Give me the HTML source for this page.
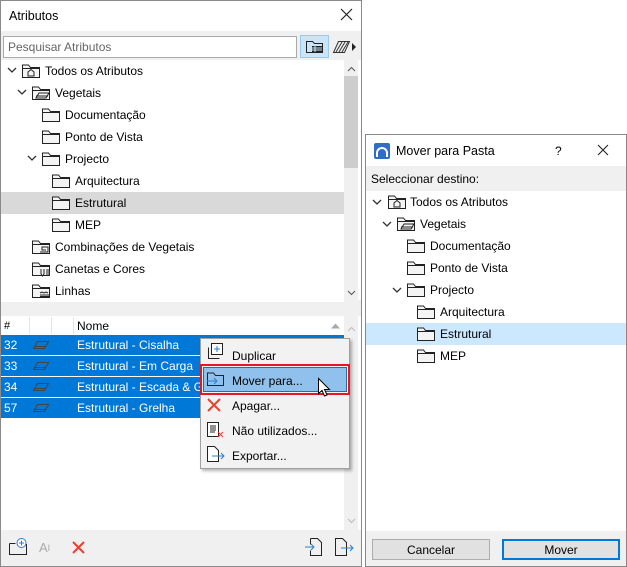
<!DOCTYPE html>
<html><head><meta charset="utf-8"><style>
*{margin:0;padding:0;box-sizing:border-box}
body{width:627px;height:567px;background:#fff;font-family:"Liberation Sans",sans-serif;font-size:12px;color:#000;position:relative;overflow:hidden}
.a{position:absolute}
.t{position:absolute;white-space:nowrap;line-height:16px}
svg{position:absolute;overflow:visible}
</style></head><body>
<svg width="0" height="0"><defs>
<g id="f"><path d="M0.5 2.5v11h17v-10h-9l-2-2.5h-6z" fill="#f4f4f4" stroke="#222"/><path d="M0.5 4.5h17" stroke="#222"/></g>
<g id="ch"><path d="M0 0l4 4 4-4" fill="none" stroke="#333" stroke-width="1.3"/></g>
</defs></svg>

<!-- LEFT PANEL -->
<div class="a" style="left:0;top:0;width:362px;height:567px;border:1px solid #8a8a8a;background:#fff"></div>
<div class="t" style="left:9px;top:8px;font-size:12.5px">Atributos</div>
<svg style="left:341px;top:9px" width="12" height="12"><path d="M0 0L11 11M11 0L0 11" stroke="#222" stroke-width="1.2"/></svg>
<div class="a" style="left:1px;top:31px;width:360px;height:29px;background:#f0f0f0"></div>
<div class="a" style="left:3px;top:36px;width:294px;height:22px;background:#fff;border:1px solid #a9a9a9"></div>
<div class="t" style="left:8px;top:39px;color:#666">Pesquisar Atributos</div>
<div class="a" style="left:300px;top:35px;width:29px;height:23px;background:#cce4f7;border:1px solid #99c9ef"></div>
<svg style="left:306px;top:40px" width="18" height="14"><path d="M.5 1.5v11h16v-9h-8l-2-2z" fill="none" stroke="#222"/><rect x="6" y="6" width="10" height="6" fill="#222"/><path d="M6 8h10M6 10h10M9 6v6" stroke="#cce4f7"/></svg>
<svg style="left:333px;top:40px" width="24" height="14"><path d="M.5 12.5l5-11h11l-5 11z" fill="none" stroke="#333"/><path d="M3 12l6-10M6 12l6-10M9 12l6-10" stroke="#333"/><path d="M19 3l4 4-4 4z" fill="#222"/></svg>

<!-- tree -->
<div class="a" style="left:1px;top:60px;width:343px;height:240px;background:#fff"></div>
<div class="a" style="left:344px;top:60px;width:14px;height:240px;background:#f0f0f0"></div>
<div class="a" style="left:344px;top:76px;width:14px;height:92px;background:#cdcdcd"></div>
<svg style="left:348px;top:67px" width="8" height="5"><path d="M0 4l3.5-3.5 3.5 3.5" fill="none" stroke="#555"/></svg>
<svg style="left:348px;top:291px" width="8" height="5"><path d="M0 0l3.5 3.5 3.5-3.5" fill="none" stroke="#555"/></svg>
<div class="a" style="left:1px;top:192px;width:343px;height:22px;background:#d9d9d9"></div>

<svg style="left:8px;top:68px" width="8" height="5"><use href="#ch"/></svg>
<svg style="left:22px;top:64px" width="18" height="14"><use href="#f"/><path d="M6 12v-4l3-2.5 3 2.5v4z" fill="none" stroke="#222"/></svg>
<div class="t" style="left:45px;top:63px">Todos os Atributos</div>
<svg style="left:18px;top:90px" width="8" height="5"><use href="#ch"/></svg>
<svg style="left:32px;top:86px" width="18" height="14"><use href="#f"/><path d="M4 12l3-5h10l-3 5zM4 10h12" fill="none" stroke="#222"/></svg>
<div class="t" style="left:55px;top:85px">Vegetais</div>
<svg style="left:42px;top:108px" width="18" height="14"><use href="#f"/></svg>
<div class="t" style="left:65px;top:107px">Documentação</div>
<svg style="left:42px;top:130px" width="18" height="14"><use href="#f"/></svg>
<div class="t" style="left:65px;top:129px">Ponto de Vista</div>
<svg style="left:28px;top:156px" width="8" height="5"><use href="#ch"/></svg>
<svg style="left:42px;top:152px" width="18" height="14"><use href="#f"/></svg>
<div class="t" style="left:65px;top:151px">Projecto</div>
<svg style="left:52px;top:174px" width="18" height="14"><use href="#f"/></svg>
<div class="t" style="left:75px;top:173px">Arquitectura</div>
<svg style="left:52px;top:196px" width="18" height="14"><use href="#f"/></svg>
<div class="t" style="left:75px;top:195px">Estrutural</div>
<svg style="left:52px;top:218px" width="18" height="14"><use href="#f"/></svg>
<div class="t" style="left:75px;top:217px">MEP</div>
<svg style="left:32px;top:240px" width="18" height="14"><use href="#f"/><path d="M8 12h8v-5h-6v3h4" fill="none" stroke="#222"/></svg>
<div class="t" style="left:55px;top:239px">Combinações de Vegetais</div>
<svg style="left:32px;top:262px" width="18" height="14"><use href="#f"/><path d="M9 7v5l1.5 2 1.5-2v-5M14 8h3M14 10h3M14 12h3" fill="none" stroke="#222"/></svg>
<div class="t" style="left:55px;top:261px">Canetas e Cores</div>
<svg style="left:32px;top:284px" width="18" height="14"><use href="#f"/><path d="M8 9l2-1 2 1 2-1 2 1M8 11h9" fill="none" stroke="#222"/><rect x="8" y="12" width="9" height="2" fill="#222"/></svg>
<div class="t" style="left:55px;top:283px">Linhas</div>

<!-- splitter -->
<div class="a" style="left:1px;top:300px;width:360px;height:16px;background:#f0f0f0"></div>
<div class="a" style="left:1px;top:300px;width:343px;height:2px;background:#fff"></div>

<!-- table -->
<div class="a" style="left:1px;top:316px;width:343px;height:214px;background:#fff"></div>
<div class="a" style="left:344px;top:316px;width:14px;height:214px;background:#f0f0f0"></div>
<svg style="left:348px;top:327px" width="8" height="5"><path d="M0 4l3.5-3.5 3.5 3.5" fill="none" stroke="#bbb"/></svg>
<svg style="left:348px;top:519px" width="8" height="5"><path d="M0 0l3.5 3.5 3.5-3.5" fill="none" stroke="#bbb"/></svg>
<div class="a" style="left:29px;top:317px;width:1px;height:17px;background:#e5e5e5"></div>
<div class="a" style="left:51px;top:317px;width:1px;height:17px;background:#e5e5e5"></div>
<div class="a" style="left:73px;top:317px;width:1px;height:17px;background:#e5e5e5"></div>
<div class="t" style="left:4px;top:318px;font-size:11px">#</div>
<div class="t" style="left:77px;top:318px">Nome</div>
<svg style="left:331px;top:323px" width="10" height="6"><path d="M0 5.5l4.5-5 4.5 5z" fill="#aaa"/></svg>

<div class="a" style="left:1px;top:335px;width:343px;height:20px;background:#0078d7"></div>
<div class="a" style="left:1px;top:356px;width:343px;height:20px;background:#0078d7"></div>
<div class="a" style="left:1px;top:377px;width:343px;height:20px;background:#0078d7"></div>
<div class="a" style="left:1px;top:398px;width:343px;height:20px;background:#0078d7"></div>
<div class="t" style="left:4px;top:337px;color:#fff">32</div>
<div class="t" style="left:4px;top:358px;color:#fff">33</div>
<div class="t" style="left:4px;top:379px;color:#fff">34</div>
<div class="t" style="left:4px;top:400px;color:#fff">57</div>
<svg style="left:33px;top:341px" width="16" height="8"><path d="M.5 7.5l4-7h11l-4 7z" fill="none" stroke="#444"/><path d="M2 5.5h11" stroke="#444"/></svg>
<svg style="left:33px;top:362px" width="16" height="8"><path d="M.5 7.5l4-7h11l-4 7z" fill="none" stroke="#444"/><path d="M2 5.5h11" stroke="#444"/></svg>
<svg style="left:33px;top:383px" width="16" height="8"><path d="M.5 7.5l4-7h11l-4 7z" fill="none" stroke="#444"/><path d="M2 5.5h11" stroke="#444"/></svg>
<svg style="left:33px;top:404px" width="16" height="8"><path d="M.5 7.5l4-7h11l-4 7z" fill="none" stroke="#444"/><path d="M2 5.5h11" stroke="#444"/></svg>
<div class="t" style="left:77px;top:337px;color:#fff">Estrutural - Cisalha</div>
<div class="t" style="left:77px;top:358px;color:#fff">Estrutural - Em Carga</div>
<div class="t" style="left:77px;top:379px;color:#fff">Estrutural - Escada &amp; Gui</div>
<div class="t" style="left:77px;top:400px;color:#fff">Estrutural - Grelha</div>

<!-- bottom toolbar -->
<div class="a" style="left:1px;top:530px;width:360px;height:36px;background:#f0f0f0"></div>
<svg style="left:9px;top:538px" width="19" height="18"><path d="M.5 5.5v11h17v-10h-6M.5 5.5h6" fill="none" stroke="#222"/><circle cx="12.5" cy="5" r="4.5" fill="#fff" stroke="#2a7fd4"/><path d="M12.5 2.5v5M10 5h5" stroke="#2a7fd4"/></svg>
<div class="t" style="left:39px;top:540px;color:#aaa;font-size:13px">A<span style="font-size:9px;vertical-align:top">I</span></div>
<svg style="left:72px;top:541px" width="13" height="13"><path d="M1 1l11 11M12 1L1 12" stroke="#e8412c" stroke-width="2"/></svg>
<svg style="left:305px;top:538px" width="18" height="18"><path d="M5.5 .5h7l4 4v13h-11v-5M5.5 6.5v-6" fill="none" stroke="#222"/><path d="M0 9h9M6 6l3 3-3 3" fill="none" stroke="#2a7fd4"/></svg>
<svg style="left:335px;top:538px" width="20" height="18"><path d="M.5 .5h7l4 4v13h-11z" fill="none" stroke="#222"/><path d="M6 10h12M15 7l3 3-3 3" fill="none" stroke="#2a7fd4"/></svg>

<!-- context menu -->
<div class="a" style="left:200px;top:338px;width:150px;height:131px;background:#f2f2f2;border:1px solid #a0a0a0;box-shadow:2px 2px 3px rgba(0,0,0,.3)"></div>
<div class="a" style="left:200px;top:364px;width:150px;height:31px;border:2px solid #e8161e"></div>
<div class="a" style="left:203px;top:367px;width:144px;height:25px;background:#90c0ec;border:1px solid #2a6aa8"></div>
<svg style="left:208px;top:343px" width="16" height="16"><path d="M.5 4.5v11h11" fill="none" stroke="#222"/><rect x="3.5" y=".5" width="11" height="11" fill="#fff" stroke="#222"/><path d="M9 3v6M6 6h6" stroke="#2a7fd4"/></svg>
<div class="t" style="left:232px;top:348px">Duplicar</div>
<svg style="left:207px;top:372px" width="18" height="14"><path d="M.5 2.5v11h16v-10h-8l-2-2.5h-6z" fill="none" stroke="#222"/><path d="M0 9h10M7 6l3 3-3 3" fill="none" stroke="#2a7fd4"/></svg>
<div class="t" style="left:232px;top:373px">Mover para...</div>
<svg style="left:318px;top:378px" width="13" height="20"><path d="M.5 .5v15l3.5-3 2.5 5.5 2.5-1-2.5-5.5h5z" fill="#fff" stroke="#000"/></svg>
<svg style="left:207px;top:398px" width="14" height="14"><path d="M1 1l12 12M13 1L1 13" stroke="#e8412c" stroke-width="2"/></svg>
<div class="t" style="left:232px;top:398px">Apagar...</div>
<svg style="left:207px;top:422px" width="18" height="16"><rect x=".5" y=".5" width="11" height="14" fill="#fff" stroke="#222"/><path d="M3 4h6M3 6h6M3 8h6M3 10h5" stroke="#222"/><path d="M11 10l5 5M16 10l-5 5" stroke="#e8412c"/></svg>
<div class="t" style="left:232px;top:423px">Não utilizados...</div>
<svg style="left:207px;top:446px" width="18" height="16"><path d="M.5 .5h7l4 4v11h-11z" fill="#fff" stroke="#222"/><path d="M5 10h12M14 7l3 3-3 3" fill="none" stroke="#2a7fd4"/></svg>
<div class="t" style="left:232px;top:448px">Exportar...</div>

<!-- RIGHT DIALOG -->
<div class="a" style="left:362px;top:0;width:265px;height:567px;background:#fff"></div>
<div class="a" style="left:365px;top:134px;width:262px;height:433px;border:1px solid #888;background:#fff"></div>
<svg style="left:374px;top:143px" width="16" height="16"><rect width="16" height="16" rx="2" fill="#2d6fc7"/><path d="M3 14v-4a5 5 0 0 1 10 0v4" fill="none" stroke="#fff" stroke-width="2"/></svg>
<div class="t" style="left:396px;top:143px;font-size:12.5px">Mover para Pasta</div>
<div class="t" style="left:555px;top:143px;font-size:12px">?</div>
<svg style="left:598px;top:145px" width="11" height="11"><path d="M0 0L10 10M10 0L0 10" stroke="#222" stroke-width="1.1"/></svg>
<div class="a" style="left:366px;top:166px;width:260px;height:25px;background:#f0f0f0"></div>
<div class="t" style="left:371px;top:171px">Seleccionar destino:</div>
<div class="a" style="left:366px;top:323px;width:260px;height:22px;background:#cce8ff"></div>

<svg style="left:373px;top:200px" width="8" height="5"><use href="#ch"/></svg>
<svg style="left:388px;top:195px" width="18" height="14"><use href="#f"/><path d="M6 12v-4l3-2.5 3 2.5v4z" fill="none" stroke="#222"/></svg>
<div class="t" style="left:410px;top:194px">Todos os Atributos</div>
<svg style="left:383px;top:222px" width="8" height="5"><use href="#ch"/></svg>
<svg style="left:397px;top:217px" width="18" height="14"><use href="#f"/><path d="M4 12l3-5h10l-3 5zM4 10h12" fill="none" stroke="#222"/></svg>
<div class="t" style="left:420px;top:216px">Vegetais</div>
<svg style="left:407px;top:239px" width="18" height="14"><use href="#f"/></svg>
<div class="t" style="left:430px;top:238px">Documentação</div>
<svg style="left:407px;top:261px" width="18" height="14"><use href="#f"/></svg>
<div class="t" style="left:430px;top:260px">Ponto de Vista</div>
<svg style="left:393px;top:288px" width="8" height="5"><use href="#ch"/></svg>
<svg style="left:407px;top:283px" width="18" height="14"><use href="#f"/></svg>
<div class="t" style="left:430px;top:282px">Projecto</div>
<svg style="left:417px;top:305px" width="18" height="14"><use href="#f"/></svg>
<div class="t" style="left:440px;top:304px">Arquitectura</div>
<svg style="left:417px;top:327px" width="18" height="14"><use href="#f"/></svg>
<div class="t" style="left:440px;top:326px">Estrutural</div>
<svg style="left:417px;top:349px" width="18" height="14"><use href="#f"/></svg>
<div class="t" style="left:440px;top:348px">MEP</div>

<div class="a" style="left:366px;top:531px;width:260px;height:35px;background:#f0f0f0"></div>
<div class="a" style="left:372px;top:539px;width:118px;height:21px;background:#e1e1e1;border:1px solid #adadad"></div>
<div class="t" style="left:372px;top:542px;width:118px;text-align:center">Cancelar</div>
<div class="a" style="left:502px;top:539px;width:118px;height:21px;background:#e1e1e1;border:2px solid #0078d7"></div>
<div class="t" style="left:502px;top:542px;width:118px;text-align:center">Mover</div>
</body></html>
